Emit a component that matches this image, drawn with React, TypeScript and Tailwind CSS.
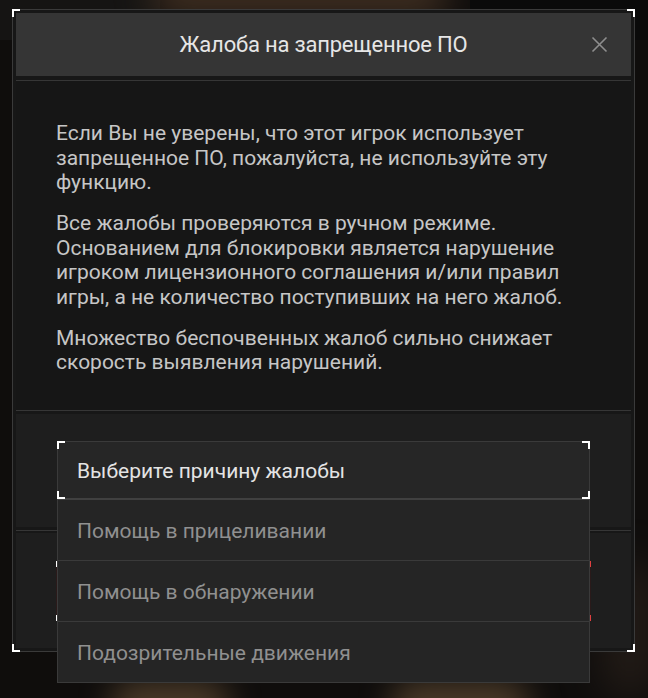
import React from "react";

function Corner({ pos, color = "bg-white" }: { pos: "tl" | "tr" | "bl" | "br"; color?: string }) {
  const v = pos[0] === "t" ? "top-[-1px]" : "bottom-[-1px]";
  const h = pos[1] === "l" ? "left-[-1px]" : "right-[-1px]";
  return (
    <div className={`pointer-events-none absolute ${v} ${h} w-[8px] h-[8px]`}>
      <div className={`absolute ${pos[0] === "t" ? "top-0" : "bottom-0"} left-0 right-0 h-[2px] ${color}`} />
      <div className={`absolute ${pos[1] === "l" ? "left-0" : "right-0"} top-0 bottom-0 w-[2px] ${color}`} />
    </div>
  );
}

export default function App() {
  return (
    <div
      className="relative w-[648px] h-[698px] overflow-hidden bg-[#0f0d0c]"
      style={{ fontFamily: 'Roboto, "Noto Sans", "DejaVu Sans", sans-serif' }}
    >
      {/* background ambience */}
      <div className="absolute left-0 top-0 w-[160px] h-[40px] bg-[#151413]" />
      <div className="absolute left-[150px] top-[-30px] w-[300px] h-[50px] rounded-full bg-[#4a3626] blur-[18px] opacity-80" />
      <div className="absolute left-[470px] top-0 w-[178px] h-[40px] bg-[#0a0a0a]" />
      <div className="absolute left-[110px] top-[680px] w-[120px] h-[50px] rounded-full bg-[#5a4630] blur-[16px] opacity-80" />
      <div className="absolute left-[390px] top-[680px] w-[140px] h-[50px] rounded-full bg-[#5a4630] blur-[16px] opacity-80" />
      <div className="absolute left-[600px] top-[560px] w-[60px] h-[140px] rounded-full bg-[#2a211b] blur-[20px] opacity-70" />

      <div className="relative pt-[9px] pl-[12px]">
        <div className="relative w-[623px] h-[643px] border border-[#3a3a3a] bg-[#171717] p-[3px] flex flex-col">
          <Corner pos="tl" />
          <Corner pos="tr" />
          <Corner pos="bl" />
          <Corner pos="br" />

          {/* header */}
          <div className="relative h-[63px] bg-[#353535] flex items-center justify-center">
            <span className="text-[22px] leading-none text-[#e6e6e6] tracking-[-0.2px]">
              Жалоба на запрещенное ПО
            </span>
            <button className="absolute right-[23px] top-[23px] w-[17px] h-[17px] flex items-center justify-center">
              <svg width="17" height="17" viewBox="0 0 17 17">
                <path d="M1.5 1.5 L15.5 15.5 M15.5 1.5 L1.5 15.5" stroke="#8e8e8e" strokeWidth="1.6" fill="none" />
              </svg>
            </button>
          </div>
          <div className="h-[4px]" />
          <div className="h-[1px] bg-[#363636]" />

          {/* body text */}
          <div className="h-[329px] bg-[#161616] pl-[40px] pr-[20px] pt-[40px] text-[21px] leading-[24.5px] text-[#c6c6c6] flex flex-col gap-[16.5px]">
            <p>
              Если Вы не уверены, что этот игрок использует
              <br />
              запрещенное ПО, пожалуйста, не используйте эту
              <br />
              функцию.
            </p>
            <p>
              Все жалобы проверяются в ручном режиме.
              <br />
              Основанием для блокировки является нарушение
              <br />
              игроком лицензионного соглашения и/или правил
              <br />
              игры, а не количество поступивших на него жалоб.
            </p>
            <p>
              Множество беспочвенных жалоб сильно снижает
              <br />
              скорость выявления нарушений.
            </p>
          </div>
          <div className="h-[1px] bg-[#363636]" />
          <div className="h-[3px]" />

          {/* select panel */}
          <div className="relative z-10 h-[113px] bg-[#1e1e1e] pt-[27px] pl-[41px]">
            <div className="relative w-[533px]">
              <div className="relative h-[59px] bg-[#262626] border border-[#3a3a3a] border-b-[#404040] border-b-2 flex items-center pl-[19px] pt-[4px] text-[21px] text-[#e4e4e4]">
                Выберите причину жалобы
                <Corner pos="tl" />
                <Corner pos="tr" />
                <Corner pos="bl" />
                <Corner pos="br" />
              </div>
              <div className="absolute left-0 right-0 top-full flex flex-col bg-[#252525] border-x border-[#3a3a3a]">
                {["Помощь в прицеливании", "Помощь в обнаружении", "Подозрительные движения"].map((t) => (
                  <div
                    key={t}
                    className="h-[61px] border-b border-[#3a3a3a] flex items-center pl-[19px] pt-[3px] text-[21px] text-[#909090]"
                  >
                    {t}
                  </div>
                ))}
              </div>
            </div>
          </div>
          <div className="h-[3px]" />
          <div className="h-[1px] bg-[#363636]" />
          <div className="h-[2px]" />

          {/* action panel (covered by the dropdown) */}
          <div className="h-[115px] bg-[#1e1e1e] pt-[28px] pl-[40px]">
            <div className="relative w-[535px] h-[60px] bg-[#2a1a1a]">
              <div className="absolute left-0 top-0 w-[1px] h-[6px] bg-white" />
              <div className="absolute left-0 bottom-0 w-[1px] h-[6px] bg-white" />
              <div className="absolute right-0 top-0 w-[1px] h-[6px] bg-[#e04040]" />
              <div className="absolute right-0 bottom-0 w-[1px] h-[6px] bg-[#e04040]" />
            </div>
          </div>
        </div>
      </div>
    </div>
  );
}
